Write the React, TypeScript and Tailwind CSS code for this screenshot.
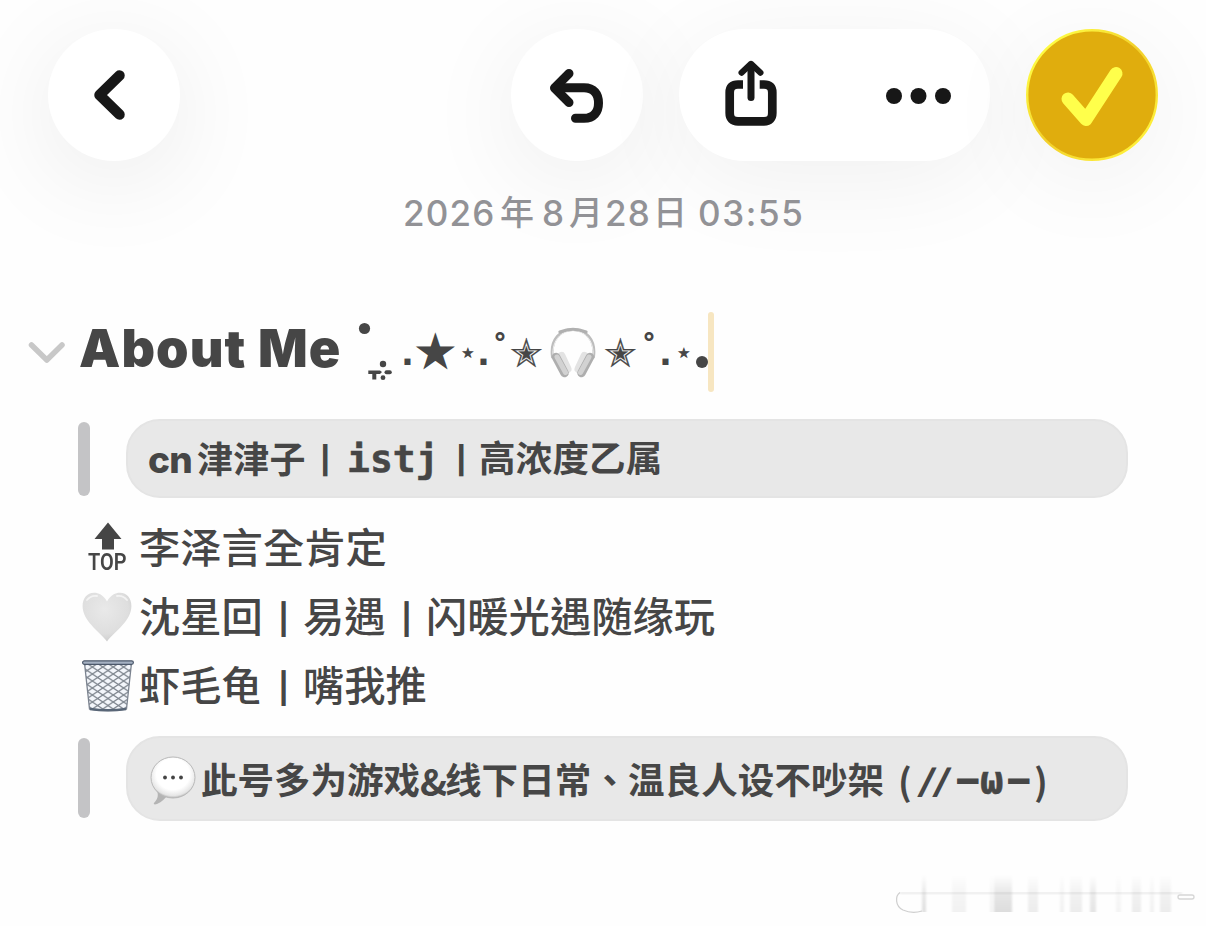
import type { ReactNode } from "react";

const cjk = "font-['Inter','Noto_Sans_CJK_TC',sans-serif]";

function BackIcon() {
  return (
    <svg width="132" height="132" viewBox="0 0 132 132" fill="none">
      <path d="M71.500 46.500 L51.500 66 L71.500 85.500" stroke="#171717" strokeWidth="10.500" strokeLinecap="round" strokeLinejoin="round" />
    </svg>
  );
}

function UndoIcon() {
  return (
    <svg width="132" height="132" viewBox="0 0 132 132" fill="none" stroke="#171717" strokeWidth="9" strokeLinecap="round" strokeLinejoin="round">
      <path d="M58 44.500 L43.500 59 L58 73.500" />
      <path d="M45 58.700 H73 C83 58.700 87.500 65 87.500 74 C87.500 83.500 82.500 89.300 73 89.300 H64.500" />
    </svg>
  );
}

function ShareIcon() {
  return (
    <svg width="60" height="80" viewBox="0 0 60 80" fill="none" stroke="#171717">
      <path d="M22 27.500 H17 Q8.700 27.500 8.700 35.500 V56 Q8.700 64.300 17 64.300 H43 Q51.300 64.300 51.300 56 V35.500 Q51.300 27.500 43 27.500 H38.700" strokeWidth="8.700" />
      <path d="M30 10 V40.500" strokeWidth="7" strokeLinecap="round" />
      <path d="M20.500 15.800 L30 6.800 L39.500 15.800" strokeWidth="6" strokeLinecap="round" strokeLinejoin="round" />
    </svg>
  );
}

function MoreIcon() {
  return (
    <svg width="66" height="16" viewBox="0 0 66 16" fill="#171717">
      <circle cx="8" cy="8" r="8" />
      <circle cx="32.500" cy="8" r="8" />
      <circle cx="57" cy="8" r="8" />
    </svg>
  );
}

function DoneIcon() {
  return (
    <svg width="132" height="132" viewBox="0 0 132 132" fill="none">
      <defs>
        <linearGradient id="rim" x1="0" y1="0" x2="1" y2="1">
          <stop offset="0.1" stopColor="#ffff45" />
          <stop offset="0.5" stopColor="#f2d02c" />
          <stop offset="0.9" stopColor="#fff23c" />
        </linearGradient>
      </defs>
      <circle cx="66" cy="66" r="64.800" fill="#e0ad0d" stroke="url(#rim)" strokeWidth="2.400" />
      <path d="M42 70 L60 90.500 L90 44.500" stroke="#ffff4b" strokeWidth="13" strokeLinecap="round" strokeLinejoin="round" />
    </svg>
  );
}

function Headphones() {
  return (
    <svg width="46" height="52" viewBox="0 0 46 52" fill="none" strokeLinecap="round">
      <path d="M2.500 30 C0 12 11 2.500 23 2.500 C35 2.500 46 12 43.500 30" stroke="#bdbdbd" strokeWidth="3" />
      <path d="M3 29 C1.500 13 12 3.500 23 3.500 C34 3.500 44.500 13 43 29" stroke="#efefef" strokeWidth="1" />
      <path d="M10 5 Q23 -0.500 36 5" stroke="#b0b0b0" strokeWidth="3.200" />
      <path d="M11.500 29 L17.500 42" stroke="#e3e3e3" strokeWidth="8" />
      <path d="M6 30 L14.500 46" stroke="#aeaeae" strokeWidth="8.500" />
      <path d="M7 30 L15.500 45.500" stroke="#d2d2d2" strokeWidth="5" />
      <path d="M34.500 29 L28.500 42" stroke="#e3e3e3" strokeWidth="8" />
      <path d="M40 30 L31.500 46" stroke="#aeaeae" strokeWidth="8.500" />
      <path d="M39 30 L30.500 45.500" stroke="#d2d2d2" strokeWidth="5" />
    </svg>
  );
}

function HeartIcon() {
  return (
    <svg width="50" height="50" viewBox="0 0 50 50">
      <defs>
        <radialGradient id="heart" cx="0.450" cy="0.350" r="0.650">
          <stop offset="0" stopColor="#e9e9e9" />
          <stop offset="0.750" stopColor="#dedede" />
          <stop offset="1" stopColor="#cfcfcf" />
        </radialGradient>
      </defs>
      <path d="M25 9.500 C21 2.500 16 .7 12 .8 C5 1 .6 6.500 .6 14 C.6 29 16 38 25 49.500 C34 38 49.400 29 49.400 14 C49.400 6.500 45 1 38 .8 C34 .7 29 2.500 25 9.500 Z" fill="url(#heart)" />
      <path d="M5 8 Q9 3 15 4 M35 4 Q41 3 45 8" stroke="#f3f3f3" strokeWidth="1.800" fill="none" strokeLinecap="round" />
    </svg>
  );
}

function BasketIcon() {
  return (
    <svg width="52" height="52" viewBox="0 0 52 52" fill="none">
      <defs>
        <pattern id="mesh" width="10.400" height="7" patternUnits="userSpaceOnUse">
          <path d="M0 0 L10.400 7 M10.400 0 L0 7" stroke="#7f868f" strokeWidth="1.300" />
        </pattern>
      </defs>
      <path d="M2.500 3 L7.500 49 Q26 52 44.500 49 L49.500 3 Z" fill="#f3f6fb" />
      <path d="M2.500 3 L7.500 49 Q26 52 44.500 49 L49.500 3 Z" fill="url(#mesh)" stroke="#7b838f" strokeWidth="1.300" />
      <path d="M8 49 Q26 51.500 44 49" stroke="#596677" strokeWidth="2.600" />
      <rect x="0.600" y="0.800" width="50.800" height="3.600" rx="1.800" fill="#a5b1c2" stroke="#4c586b" strokeWidth="1.200" />
    </svg>
  );
}

function BubbleIcon() {
  return (
    <svg width="46" height="50" viewBox="0 0 46 50">
      <defs>
        <radialGradient id="bubble" cx="0.5" cy="0.420" r="0.580">
          <stop offset="0.650" stopColor="#ffffff" />
          <stop offset="0.900" stopColor="#e6e6e6" />
          <stop offset="1" stopColor="#b5b5b5" />
        </radialGradient>
      </defs>
      <path d="M7 35 C9 40 7 44 4 47 C3 48.500 5 48.800 7 48 C12 46 15 42 18 39 Z" fill="#b4b4b4" />
      <ellipse cx="23" cy="21.500" rx="22" ry="20.500" fill="url(#bubble)" stroke="#b9b9b9" strokeWidth="1" />
      <circle cx="15" cy="21.500" r="1.900" fill="#444" />
      <circle cx="23" cy="21.500" r="1.900" fill="#444" />
      <circle cx="31" cy="21.500" r="1.900" fill="#444" />
    </svg>
  );
}

function TopIcon() {
  return (
    <div className="flex h-[52px] w-[39px] flex-col items-center">
      <svg width="28" height="28" viewBox="0 0 28 28" fill="#464646">
        <path d="M14 0.500 L27.500 17 H20 V27.500 H8 V17 H0.500 Z" />
      </svg>
      <span className="mt-[2px] scale-x-[0.83] font-['Roboto',sans-serif] text-[24px] leading-[20px] font-semibold">TOP</span>
    </div>
  );
}

// Loose dots that precede the stars in the title
function Sparkle() {
  return (
    <svg width="36" height="60" viewBox="0 0 36 60" fill="#464646">
      <circle cx="6.500" cy="6.500" r="5.600" />
      <circle cx="25" cy="42" r="3.200" />
      <circle cx="25" cy="55.700" r="2.400" />
      <path d="M10.300 48.500 H22 L24 50 L22 52 H18.300 V57.500 H14.300 V52 H10.300 Z" />
      <rect x="26.500" y="48.300" width="7.300" height="4" rx="2" />
    </svg>
  );
}

function Quote({ bar, box, children }: { bar: string; box: string; children: ReactNode }) {
  return (
    <div className="flex items-center pl-[78px]">
      <div className={`w-3 rounded-full bg-[#c4c4c6] ${bar}`} />
      <div className={`ml-9 flex w-[1002px] items-center rounded-[34px] border-2 border-[#e4e4e4] bg-[#e8e8e8] font-bold whitespace-nowrap ${box}`}>
        {children}
      </div>
    </div>
  );
}

function Line({ icon, children }: { icon: ReactNode; children: ReactNode }) {
  return (
    <div className="flex h-[69.300px] items-center pl-[82px]">
      <div className="flex w-[57px] shrink-0">{icon}</div>
      {children}
    </div>
  );
}

const smear = [
  { x: 62, w: 4, o: 0.12 },
  { x: 92, w: 14, o: 0.05 },
  { x: 130, w: 3, o: 0.05 },
  { x: 134, w: 18, o: 0.13 },
  { x: 168, w: 10, o: 0.07 },
  { x: 200, w: 4, o: 0.05 },
  { x: 210, w: 12, o: 0.07 },
  { x: 230, w: 6, o: 0.1 },
  { x: 256, w: 5, o: 0.04 },
  { x: 272, w: 9, o: 0.07 },
  { x: 290, w: 4, o: 0.05 },
  { x: 300, w: 11, o: 0.07 },
];

function Watermark() {
  return (
    <svg width="346" height="66" viewBox="0 0 346 66" fill="none">
      <defs>
        <linearGradient id="fade" x1="0" y1="16" x2="0" y2="53" gradientUnits="userSpaceOnUse">
          <stop offset="0" stopColor="#000" stopOpacity="0" />
          <stop offset="0.500" stopColor="#000" stopOpacity="0.700" />
          <stop offset="1" stopColor="#000" />
        </linearGradient>
        <filter id="soft">
          <feGaussianBlur stdDeviation="1.200 0.600" />
        </filter>
      </defs>
      <g filter="url(#soft)">
        {smear.map((s) => (
          <rect key={s.x} x={s.x} y="16" width={s.w} height="37" fill="url(#fade)" opacity={s.o} />
        ))}
        <rect x="40" y="33" width="282" height="2.500" fill="#000" fillOpacity="0.050" />
      </g>
      <path d="M62 52 Q52 55 43 51 C35 47 35 37 40 33.500" stroke="#cfcfcf" strokeWidth="1.200" />
      <rect x="318" y="36" width="16" height="4" rx="2" stroke="#d6d6d6" strokeWidth="1.300" />
    </svg>
  );
}

export default function App() {
  return (
    <div className={`h-[926px] w-[1206px] overflow-hidden bg-[#fefefe] text-[#464646] ${cjk}`}>
      <header className="flex h-[161px] pt-[29px] pl-12">
        <button className="size-[132px] rounded-full bg-white shadow-[0_18px_100px_rgba(0,0,0,0.08)]">
          <BackIcon />
        </button>
        <button className="ml-[331px] size-[132px] rounded-full bg-white shadow-[0_18px_100px_rgba(0,0,0,0.07)]">
          <UndoIcon />
        </button>
        <div className="ml-9 flex h-[132px] w-[311px] items-center rounded-full bg-white pl-[41.500px] shadow-[0_18px_100px_rgba(0,0,0,0.06)]">
          <div className="mt-[3px]">
            <ShareIcon />
          </div>
          <div className="mt-[2px] ml-[105.500px]">
            <MoreIcon />
          </div>
        </div>
        <button className="ml-9 size-[132px] rounded-full shadow-[0_18px_100px_rgba(0,0,0,0.06)]">
          <DoneIcon />
        </button>
      </header>

      <div className="mt-8 flex h-10 items-center pl-[403px] text-[35px] leading-10 font-medium whitespace-nowrap text-[#929296]">
        <span className="w-[97px] tracking-[1.200px]">2026</span>
        <span className="w-[42px] text-[34px]">年</span>
        <span className="w-[27px]">8</span>
        <span className="w-[36px] text-[34px]">月</span>
        <span className="w-[48px] tracking-[1.200px]">28</span>
        <span className="w-[45px] text-[34px]">日</span>
        <span className="tracking-[1.600px]">03:55</span>
      </div>

      <h1 className="mt-[79px] flex h-20 items-start pl-[28px] whitespace-nowrap">
        <svg className="mt-[29px]" width="38" height="24" viewBox="0 0 38 24" fill="none">
          <path d="M3.500 4 L18.800 19 L34 4" stroke="#c8c8c8" strokeWidth="5.500" strokeLinecap="round" strokeLinejoin="round" />
        </svg>
        <span className="ml-[13px] w-[279px] text-[52px] leading-[73px] font-black tracking-[1.100px]">About Me</span>
        <span className="mt-[10px] w-[43px]">
          <Sparkle />
        </span>
        <span className="flex h-20 font-['DejaVu_Sans',sans-serif]">
          <span className="w-[16px] text-[34px] leading-[82px] font-bold">.</span>
          <span className="w-[43px] text-[41px] leading-[80px] [-webkit-text-stroke:2.5px_#464646] [stroke-linejoin:round]">★</span>
          <span className="w-[17px] text-[25px] leading-[81px] [-webkit-text-stroke:0.8px_#464646]">⋆</span>
          <span className="w-[15px] text-[34px] leading-[82px] font-bold">.</span>
          <span className="w-[18px] text-[32px] leading-[77px] font-bold">˚</span>
          <span className="w-[40px] text-[39px] leading-[83px] [-webkit-text-stroke:0.2px_#464646]">✭</span>
        </span>
        <span className="mt-[15px] w-[54px]">
          <Headphones />
        </span>
        <span className="flex h-20 font-['DejaVu_Sans',sans-serif]">
          <span className="w-[37px] text-[39px] leading-[83px] [-webkit-text-stroke:0.2px_#464646]">✭</span>
          <span className="w-[18px] text-[32px] leading-[77px] font-bold">˚</span>
          <span className="w-[17px] text-[34px] leading-[82px] font-bold">.</span>
          <span className="w-[20px] text-[25px] leading-[81px] [-webkit-text-stroke:0.8px_#464646]">⋆</span>
          <span className="mt-[44px] size-[12px] rounded-full bg-[#464646]" />
        </span>
        <span className="h-20 w-1.5 rounded-full bg-[#f7e6c1]" />
      </h1>

      <div className="mt-[27px]">
        <Quote bar="h-[74px]" box="h-[79px] pt-[2px] pl-5 text-[36.500px]">
          <span className="w-[49px] text-[37px] font-extrabold tracking-[-0.800px]">cn</span>
          <span className="w-[123px] text-[36px] tracking-[0.200px]">津津子</span>
          <span className="w-[27px] pt-1 text-[27px] font-extrabold">|</span>
          <span className="w-[109px] font-['DejaVu_Sans_Mono',monospace] text-[38px] [-webkit-text-stroke:0.5px_#464646]">istj</span>
          <span className="w-[23px] pt-1 text-[27px] font-extrabold">|</span>
          <span className="tracking-[0.200px]">高浓度乙属</span>
        </Quote>
      </div>

      <div className="mt-[15px] text-[41.300px] leading-[60px] font-medium whitespace-nowrap">
        <Line icon={<span className="ml-1.5"><TopIcon /></span>}>李泽言全肯定</Line>
        <Line icon={<HeartIcon />}>
          <span className="w-[139px]">沈星回</span>
          <span className="w-[25px] pt-1 text-[30px] font-bold">|</span>
          <span className="w-[98px]">易遇</span>
          <span className="w-[25px] pt-1 text-[30px] font-bold">|</span>
          <span>闪暖光遇随缘玩</span>
        </Line>
        <Line icon={<BasketIcon />}>
          <span className="w-[139px]">虾毛龟</span>
          <span className="w-[25px] pt-1 text-[30px] font-bold">|</span>
          <span>嘴我推</span>
        </Line>
      </div>

      <div className="mt-[15px]">
        <Quote bar="h-[80px]" box="h-[85px] pl-[22px] text-[36.500px]">
          <span className="w-[51px] pt-[6px]">
            <BubbleIcon />
          </span>
          <span className="flex pt-[5px]">
            <span className="w-[219px]">此号多为游戏</span>
            <span className="w-[25px] font-['Noto_Sans_CJK_TC',sans-serif]">&amp;</span>
            <span className="w-[453px] tracking-[0.100px]">线下日常、温良人设不吵架</span>
            <span className="w-[24px] font-['Noto_Sans_CJK_TC',sans-serif]">(</span>
            <span className="w-[33px] skew-x-[-14deg] font-['Noto_Sans_CJK_TC',sans-serif] text-[28px] leading-[50px] tracking-[4px] [-webkit-text-stroke:1.8px_#464646]">//</span>
            <span className="w-[25px] font-['DejaVu_Sans',sans-serif] text-[31px] leading-[52px] [-webkit-text-stroke:2px_#464646]">−</span>
            <span className="w-[26px] font-['DejaVu_Sans_Mono',monospace] text-[39px] leading-[52px] [-webkit-text-stroke:0.5px_#464646]">ω</span>
            <span className="w-[28px] font-['DejaVu_Sans',sans-serif] text-[31px] leading-[52px] [-webkit-text-stroke:2px_#464646]">−</span>
            <span className="font-['Noto_Sans_CJK_TC',sans-serif]">)</span>
          </span>
        </Quote>
      </div>

      <div className="mt-[38px] ml-[860px]">
        <Watermark />
      </div>
    </div>
  );
}
